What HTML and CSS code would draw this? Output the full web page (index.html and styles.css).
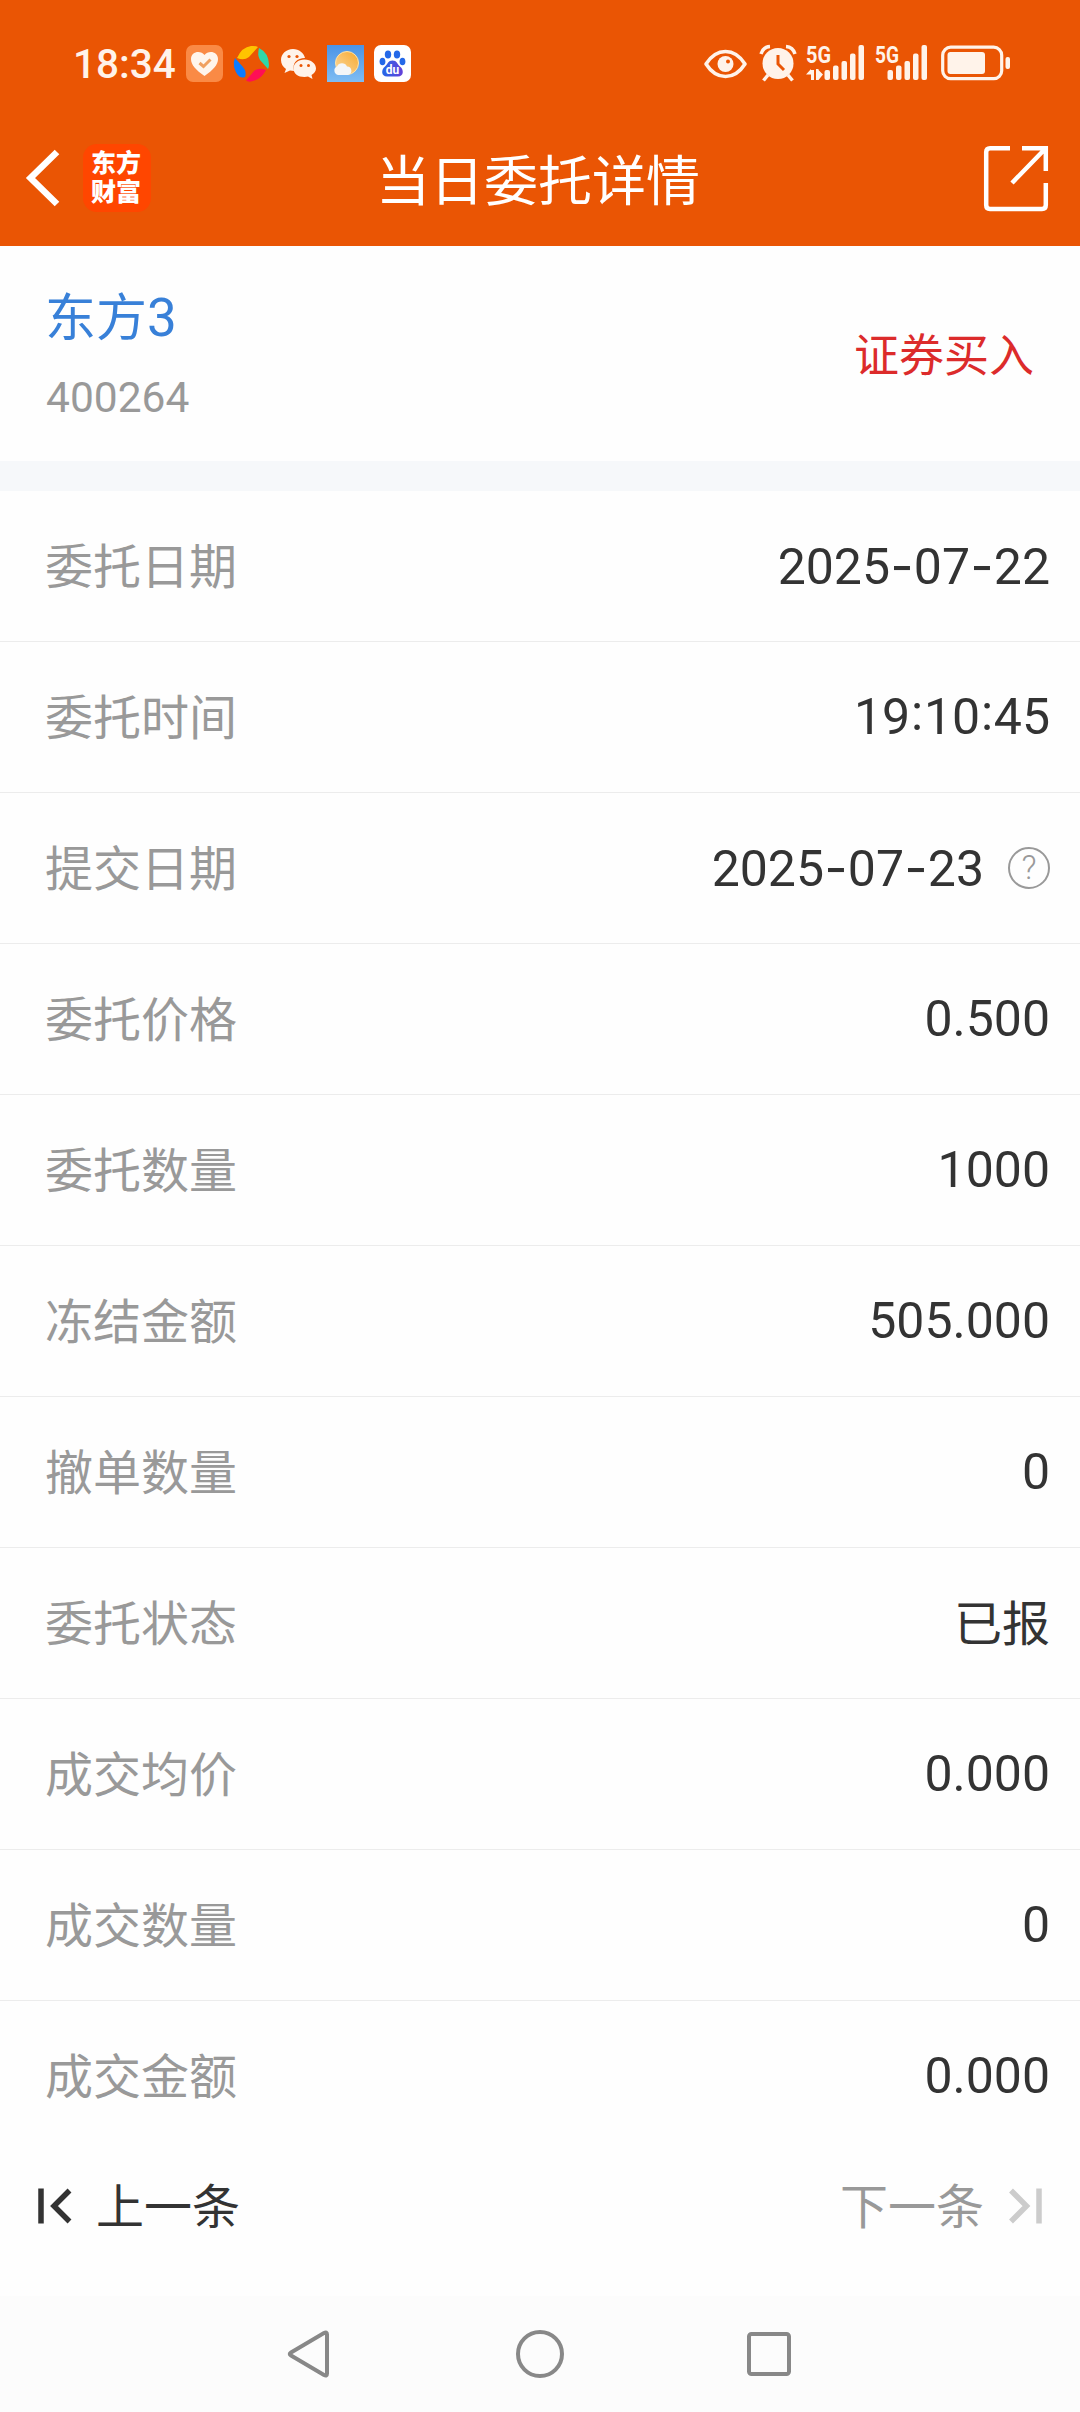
FILE: index.html
```html
<!DOCTYPE html>
<html lang="zh-CN">
<head>
    <meta charset="UTF-8">
    <meta name="viewport" content="width=device-width, initial-scale=1.0">
    <title>当日委托详情</title>
    <link rel="stylesheet" href="styles.css">
</head>
<body>
    <header class="header">
        <!-- Status bar -->
        <div class="status-bar">
            <div class="status-left">
                <span class="clock">18:34</span>
                <svg width="37" height="37" viewBox="0 0 37 37">
                    <rect width="37" height="37" rx="7" fill="#fa8a45"/>
                    <path d="M18.500 31C10 25 5 20 5 14C5 6 15 5 18.500 10C22 5 32 6 32 14C32 20 27 25 18.500 31Z" fill="#fff5ec"/>
                    <path d="M13.500 18L17.500 21.500L24.500 14.500" fill="none" stroke="#f0a060" stroke-width="3"/>
                </svg>
                <svg width="37" height="37" viewBox="0 0 37 37">
                    <path d="M4 13Q9 2 18 1Q22 .5 25 2L16 12Q11 16 4 13Z" fill="#ffc400"/>
                    <path d="M26 3Q36 8 36 20Q36 22 35 24L27 15Q24 10 26 3Z" fill="#2fd8a8"/>
                    <path d="M33 25Q28 35 18 36.500Q15 37 13 35.500L21 26Q26 22 33 25Z" fill="#ff0f55"/>
                    <path d="M2 13L10 22Q14 27 12 32Q5 35 1 22Q0 17 2 13Z" fill="#0a7bff"/>
                </svg>
                <svg width="37" height="37" viewBox="0 0 37 37">
                    <path d="M13 4C6 4 1 9 1 15C1 19 3 22 6 24L4.500 28L10 25.500L14 26C12 18 17 13 25 13C24 8 19 4 13 4Z" fill="#fff3ea"/>
                    <path d="M24.500 14.500C18 14.500 13.500 18.500 13.500 23.500C13.500 28.500 18 32 24.500 32L28 31.500L32.500 34L31.500 30C34 28.500 36 26.500 36 23.500C36 18.500 31 14.500 24.500 14.500Z" fill="#fff3ea"/>
                    <g fill="#ea5504">
                        <circle cx="9" cy="11.500" r="1.600"/><circle cx="17" cy="11.500" r="1.600"/>
                        <circle cx="21" cy="20.500" r="1.500"/><circle cx="28.500" cy="20.500" r="1.500"/>
                    </g>
                </svg>
                <svg width="37" height="37" viewBox="0 0 37 37">
                    <defs>
                        <linearGradient id="sky" x2="0" y2="1"><stop stop-color="#4a93e6"/><stop offset="1" stop-color="#7fbdf3"/></linearGradient>
                        <linearGradient id="sun" x1="1" x2="0" y2="1"><stop stop-color="#f7a92f"/><stop offset="1" stop-color="#fbd9a0"/></linearGradient>
                    </defs>
                    <rect width="37" height="37" fill="url(#sky)"/>
                    <circle cx="20" cy="18" r="11.500" fill="url(#sun)" stroke="#ffe3a8"/>
                    <path d="M11 30a4.500 4.500 0 0 1-1-8.500a5.500 5.500 0 0 1 10 0a4.300 4.300 0 0 1 1 8.500Z" fill="#f4f6f8"/>
                </svg>
                <svg width="37" height="37" viewBox="0 0 37 37">
                    <rect width="37" height="37" rx="7" fill="#fff"/>
                    <linearGradient id="paw" x2="1" y2="0"><stop stop-color="#2468e8"/><stop offset="1" stop-color="#6440d8"/></linearGradient>
                    <g fill="#2468e8">
                        <ellipse cx="14" cy="9.500" rx="3.200" ry="4"/><ellipse cx="23" cy="9.500" rx="3.200" ry="4"/>
                        <ellipse cx="8.500" cy="16.500" rx="2.900" ry="3.800"/><ellipse cx="28.500" cy="16.500" rx="2.900" ry="3.800"/>
                    </g>
                    <path d="M18.500 15.500C14 15.500 14 19 11 21.500C7 24.500 7 31.500 13 31.500H24C30 31.500 30 24.500 26 21.500C23 19 23 15.500 18.500 15.500Z" fill="url(#paw)"/>
                    <text class="paw-text" x="18.500" y="29">du</text>
                </svg>
            </div>
            <div class="status-right">
                <svg class="eye" width="43" height="37" viewBox="0 0 43 37">
                    <path d="M2 19Q10 6.500 21.500 6.500T41 19Q33 31.500 21.500 31.500T2 19Z" fill="none" stroke="#fff3ea" stroke-width="3.600" stroke-linejoin="round"/>
                    <circle cx="21.500" cy="19" r="8" fill="#fff3ea"/>
                    <circle cx="24" cy="16.500" r="2" fill="#ea5504"/>
                </svg>
                <svg class="alarm" width="36" height="37" viewBox="0 0 36 37">
                    <path d="M1 9Q3 2 10 1.500M35 9Q33 2 26 1.500" fill="none" stroke="#fff3ea" stroke-width="3.500"/>
                    <circle cx="18" cy="18.500" r="15.500" fill="#fff3ea"/>
                    <path d="M8 30L3.500 35.500M28 30L32.500 35.500" stroke="#fff3ea" stroke-width="3.500"/>
                    <path d="M18 10V19L24 25" fill="none" stroke="#ea5504" stroke-width="3"/>
                </svg>
                <svg class="signal-one" width="58" height="37" viewBox="0 0 58 37">
                    <text class="signal-text" x="0" y="17.500" textLength="25" lengthAdjust="spacingAndGlyphs">5G</text>
                    <g fill="#fff3ea">
                        <path d="M0 29.500L5 24V35H8V25H5V29.500ZM10 24H12.500V25L17 29.500L12.500 35H10Z"/>
                        <rect x="18.500" y="25" width="5.500" height="10" rx="2"/>
                        <rect x="27" y="20.500" width="5.500" height="14.500" rx="2"/>
                        <rect x="35.500" y="16" width="5.500" height="19" rx="2"/>
                        <rect x="44" y="8.500" width="5.500" height="26.500" rx="2"/>
                        <rect x="52.500" y="0" width="5.500" height="35" rx="2"/>
                    </g>
                </svg>
                <svg class="signal-two" width="53" height="37" viewBox="0 0 53 37">
                    <text class="signal-text" x="0" y="17.500" textLength="24" lengthAdjust="spacingAndGlyphs">5G</text>
                    <g fill="#fff3ea">
                        <rect x="12.500" y="25" width="5.500" height="10" rx="2"/>
                        <rect x="21" y="20.500" width="5.500" height="14.500" rx="2"/>
                        <rect x="29.500" y="16" width="5.500" height="19" rx="2"/>
                        <rect x="38" y="8.500" width="5.500" height="26.500" rx="2"/>
                        <rect x="46.500" y="0" width="5.500" height="35" rx="2"/>
                    </g>
                </svg>
                <svg width="70" height="37" viewBox="0 0 70 37">
                    <rect x="1.700" y="2.200" width="59" height="31.500" rx="8" fill="none" stroke="#fff3ea" stroke-width="3.200"/>
                    <rect x="6.500" y="7" width="37.500" height="22" rx="3" fill="#fff3ea"/>
                    <rect x="64.500" y="12" width="4.500" height="12" rx="2" fill="#fff3ea"/>
                </svg>
            </div>
        </div>

        <!-- Title bar -->
        <div class="title-bar">
            <div class="title-left">
                <svg width="36" height="60" viewBox="0 0 36 60">
                    <path d="M33 4L6.500 30L33 56" fill="none" stroke="#fff" stroke-width="6.500"/>
                </svg>
                <div class="app-logo"><span>东方</span><span>财富</span></div>
            </div>
            <h1 class="title">当日委托详情</h1>
            <svg class="share" width="64" height="66" viewBox="0 0 64 66">
                <path d="M26 3.200H6Q2.200 3.200 2.200 7V60Q2.200 64 6 64H58Q61.800 64 61.800 60V38M61.800 26V3.200H38M61 4L28 38" fill="none" stroke="#fff" stroke-width="4.500"/>
            </svg>
        </div>
    </header>

    <section class="summary">
        <div>
            <div class="stock-name">东方<span class="stock-digit">3</span></div>
            <div class="stock-code">400264</div>
        </div>
        <div class="trade-type">证券买入</div>
    </section>

    <!-- Order details -->
    <main class="details">
        <div class="row"><span class="label">委托日期</span><span class="value">2025<i class="dash">-</i>07<i class="dash">-</i>22</span></div>
        <div class="row"><span class="label">委托时间</span><span class="value">19<i class="colon">:</i>10<i class="colon">:</i>45</span></div>
        <div class="row">
            <span class="label">提交日期</span>
            <span class="value">2025<i class="dash">-</i>07<i class="dash">-</i>23</span>
            <span class="help">?</span>
        </div>
        <div class="row"><span class="label">委托价格</span><span class="value">0.500</span></div>
        <div class="row"><span class="label">委托数量</span><span class="value">1000</span></div>
        <div class="row"><span class="label">冻结金额</span><span class="value">505.000</span></div>
        <div class="row"><span class="label">撤单数量</span><span class="value">0</span></div>
        <div class="row"><span class="label">委托状态</span><span class="value value-text">已报</span></div>
        <div class="row"><span class="label">成交均价</span><span class="value">0.000</span></div>
        <div class="row"><span class="label">成交数量</span><span class="value">0</span></div>
        <div class="row"><span class="label">成交金额</span><span class="value">0.000</span></div>
    </main>

    <footer class="pager">
        <div class="pager-item">
            <svg width="34" height="36" viewBox="0 0 34 36">
                <path d="M4 .500V35.500M32.500 2.500L17 18L32.500 33.500" fill="none" stroke="#333" stroke-width="5.500"/>
            </svg>
            <span class="pager-text">上一条</span>
        </div>
        <div class="pager-item disabled">
            <span class="pager-text">下一条</span>
            <svg width="34" height="36" viewBox="0 0 34 36">
                <path d="M30 .500V35.500M2 2.500L17.500 18L2 33.500" fill="none" stroke="#ccc" stroke-width="5.500"/>
            </svg>
        </div>
    </footer>

    <!-- System navigation -->
    <nav class="nav-bar">
        <svg width="50" height="50" viewBox="0 0 50 50">
            <path d="M5 23.500Q2.500 25 5 26.500L38 46Q41 47.500 41 44.500V5.500Q41 2.500 38 4Z" fill="none" stroke="#888" stroke-width="4"/>
        </svg>
        <svg width="50" height="50" viewBox="0 0 50 50">
            <circle cx="25" cy="25" r="22" fill="none" stroke="#888" stroke-width="4"/>
        </svg>
        <svg width="50" height="50" viewBox="0 0 50 50">
            <rect x="5" y="5" width="40" height="40" rx="2.500" fill="none" stroke="#888" stroke-width="4"/>
        </svg>
    </nav>
</body>
</html>
```
FILE: styles.css
```css
body {
    margin: 0;
    width: 1080px;
    height: 2412px;
    display: flex;
    flex-direction: column;
    background: #fefefe;
    color: #333;
    font-family: Roboto, "Noto Sans CJK SC", sans-serif;
    overflow: hidden;
}
svg {
    display: block;
    flex: none;
    overflow: visible;
}
.header {
    height: 246px;
    background: #ea5504;
    color: #fff;
}
.status-bar {
    display: flex;
    justify-content: space-between;
    height: 82px;
    padding: 45px 69px 0 73px;
    box-sizing: border-box;
}
.status-left {
    display: flex;
    gap: 10px;
}
.clock {
    width: 103px;
    font-size: 40.5px;
    font-weight: 500;
    line-height: 38px;
    color: #fff3ea;
}
.status-right {
    display: flex;
}
.eye {
    margin-right: 13px;
}
.alarm {
    margin-right: 10px;
}
.signal-one {
    margin-right: 11px;
}
.signal-two {
    margin-right: 13px;
}
.signal-text {
    font-size: 24.5px;
    font-weight: 700;
    fill: #fff3ea;
}
.paw-text {
    font-size: 12px;
    font-weight: 700;
    text-anchor: middle;
    fill: #fff;
}
.title-bar {
    display: grid;
    grid-template-columns: 1fr auto 1fr;
    align-items: center;
    height: 132px;
    margin-top: 30px;
    padding: 0 32px 0 24px;
}
.title-left {
    display: flex;
    align-items: center;
    gap: 23px;
}
.app-logo {
    display: flex;
    flex-direction: column;
    justify-content: center;
    align-items: center;
    width: 66px;
    height: 68px;
    padding-right: 2px;
    border-radius: 14px;
    background: #ff4600;
    font-size: 25px;
    font-weight: 900;
    line-height: 29px;
}
.title {
    margin: 0;
    padding: 9px 0 0 4px;
    font-size: 54px;
    font-weight: 400;
    line-height: 80px;
}
.share {
    justify-self: end;
}
.summary {
    display: flex;
    justify-content: space-between;
    align-items: center;
    height: 215px;
    padding: 0 46px 0 45px;
    border-bottom: 30px solid #f6f8fa;
}
.stock-name {
    padding-top: 8px;
    font-size: 51px;
    line-height: 80px;
    color: #3880d8;
}
.stock-digit {
    font-size: 53px;
}
.stock-code {
    padding-left: 1px;
    font-size: 42.5px;
    line-height: 78px;
    color: #999;
}
.trade-type {
    padding-bottom: 3px;
    font-size: 45px;
    color: #dc2b2b;
}
.row {
    display: flex;
    align-items: center;
    height: 150px;
    padding: 0 30px 0 45px;
    border-bottom: 1px solid #ececec;
}
.row:last-child {
    border-bottom-color: transparent;
}
.label {
    flex: 1;
    padding-bottom: 6px;
    font-size: 48px;
    color: #999;
}
.value {
    font-size: 50px;
}
.value-text {
    padding-bottom: 6px;
    font-size: 48px;
}
.dash {
    margin: 0 .4px;
    font-family: Inter, sans-serif;
    font-style: normal;
}
.colon {
    margin: 0 .8px;
    font-style: normal;
    line-height: 1;
    vertical-align: 4px;
}
.help {
    width: 38px;
    height: 38px;
    margin-left: 24px;
    border: 2px solid #999;
    border-radius: 50%;
    font-size: 33px;
    font-weight: 300;
    line-height: 38px;
    text-align: center;
    color: #999;
}
.pager {
    display: flex;
    justify-content: space-between;
    height: 108px;
    padding: 0 37px 36px;
}
.pager-item {
    display: flex;
    align-items: center;
    gap: 25px;
    font-size: 48px;
}
.pager-text {
    padding-bottom: 6px;
}
.disabled {
    color: #999;
}
.nav-bar {
    display: flex;
    justify-content: center;
    align-items: center;
    gap: 179px;
    height: 116px;
    background: #fcfcfc;
}
```
